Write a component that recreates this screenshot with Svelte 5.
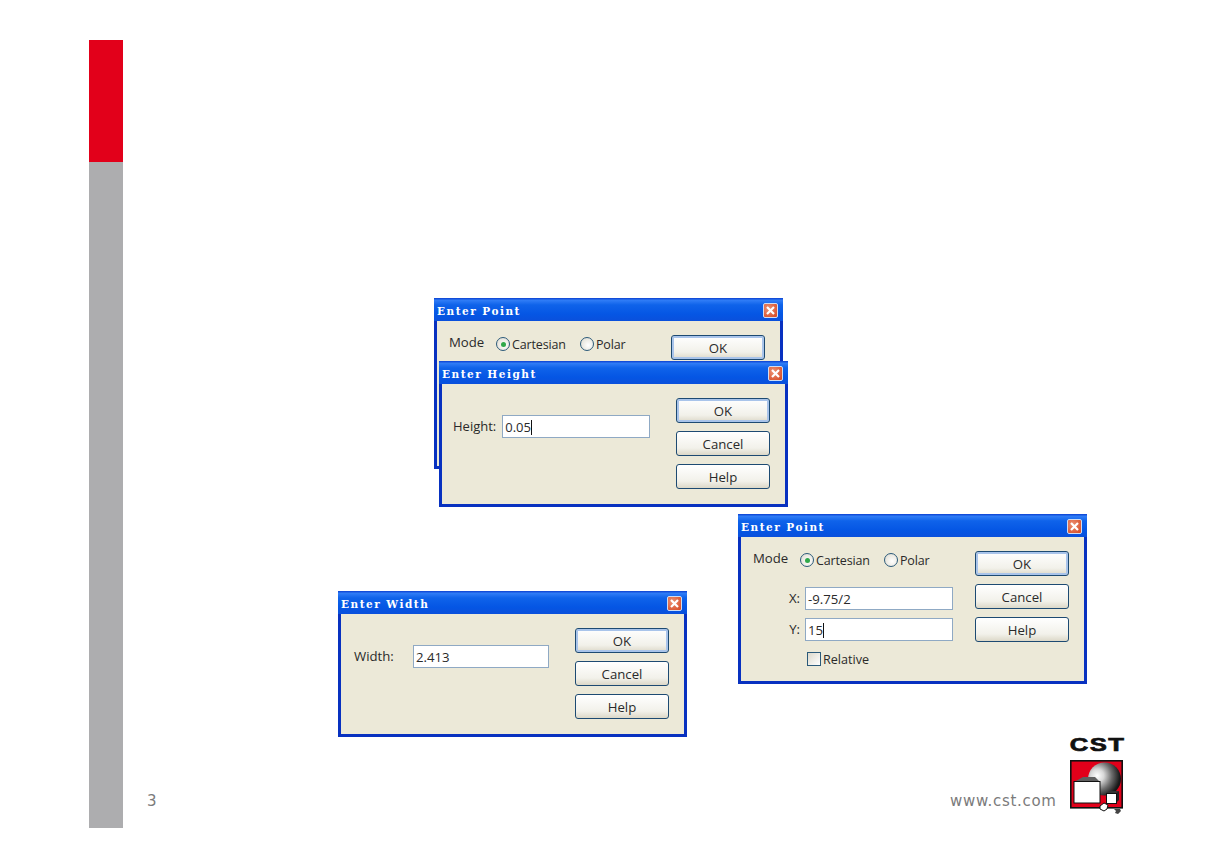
<script>
  const dialogs = [
    { id: "point-back", title: "Enter Point", kind: "point", x: "-9.75/2", y: "15", left: 434, top: 298, height: 171 },
    { id: "height", title: "Enter Height", kind: "height", value: "0.05", left: 439, top: 361, height: 146 },
    { id: "point", title: "Enter Point", kind: "point", x: "-9.75/2", y: "15", left: 738, top: 514, height: 170 },
    { id: "width", title: "Enter Width", kind: "width", value: "2.413", left: 338, top: 591, height: 146 },
  ];
</script>

<div class="page">
  <div class="rail">
    <div class="rail-red"></div>
    <div class="rail-grey"></div>
  </div>

  <div class="canvas">
    {#each dialogs as d (d.id)}
      <div class="dialog" style="left: {d.left}px; top: {d.top}px; height: {d.height}px">
        <div class="titlebar">
          <span class="title">{d.title}</span>
          <span class="close">
            <svg width="9" height="9" viewBox="0 0 9 9">
              <path d="M1 1l7 7M8 1l-7 7" stroke="#fff" stroke-width="2.2" fill="none" />
            </svg>
          </span>
        </div>
        <div class="body {d.kind}">
          <div class="main">
            {#if d.kind === "point"}
              <div class="mode">
                <span class="mode-label">Mode</span>
                <span class="radio on"></span>
                <span class="radio-label cartesian">Cartesian</span>
                <span class="radio"></span>
                <span class="radio-label">Polar</span>
              </div>
              <div class="coord">
                <span class="coord-label">X:</span>
                <span class="input">{d.x}</span>
              </div>
              <div class="coord">
                <span class="coord-label">Y:</span>
                <span class="input">{d.y}<i class="caret"></i></span>
              </div>
              <div class="relative">
                <span class="check"></span>
                <span>Relative</span>
              </div>
            {:else if d.kind === "height"}
              <div class="single">
                <span>Height:</span>
                <span class="input">{d.value}<i class="caret"></i></span>
              </div>
            {:else}
              <div class="single">
                <span class="width-label">Width:</span>
                <span class="input">{d.value}</span>
              </div>
            {/if}
          </div>
          <div class="buttons">
            <button class="default">OK</button>
            <button>Cancel</button>
            <button>Help</button>
          </div>
        </div>
      </div>
    {/each}

    <div class="logo">
      <span class="logo-text">CST</span>
      <svg width="58" height="58" viewBox="0 22 58 58">
        <defs>
          <radialGradient id="ball" cx="0.28" cy="0.4" r="0.8">
            <stop offset="0" stop-color="#ffffff" />
            <stop offset="0.25" stop-color="#d8d8d8" />
            <stop offset="0.55" stop-color="#6e6e6e" />
            <stop offset="0.85" stop-color="#1a1a1a" />
            <stop offset="1" stop-color="#0c0c0c" />
          </radialGradient>
        </defs>
        <rect x="2.8" y="23.8" width="51.4" height="47" fill="#e2001a" stroke="#111" stroke-width="1.6" />
        <circle cx="36.5" cy="42" r="16.5" fill="url(#ball)" />
        <path d="M6 45l9-5h12l5 5z" fill="#5f5f5f" />
        <rect x="6" y="44.5" width="26" height="21.5" fill="#fff" stroke="#111" />
        <path d="M38 56l4-2h9l-3 2z" fill="#333" />
        <path d="M48 56l3-2v9l-3 3z" fill="#222" />
        <rect x="38.5" y="56.5" width="10" height="10" fill="#fff" stroke="#111" />
        <path d="M32 69l4-3 4 2-1 4-3 2-4-2z" fill="#fff" stroke="#111" />
        <path d="M46 72h6l1 2-3 3-3-1 1-2z" fill="#444" />
      </svg>
    </div>
  </div>

  <span class="page-num">3</span>
  <span class="site">www.cst.com</span>
</div>

<style>
  :global(body) {
    margin: 0;
    background: #fff;
  }

  .page {
    position: relative;
    width: 1228px;
    height: 868px;
    overflow: hidden;
    font-family: "Open Sans", "Noto Sans", sans-serif;
  }

  .rail {
    position: absolute;
    left: 89px;
    top: 40px;
    width: 34px;
    height: 788px;
    display: flex;
    flex-direction: column;
  }

  .rail-red {
    height: 122px;
    background: #e2001a;
  }

  .rail-grey {
    flex: 1;
    background: #adadaf;
  }

  .canvas {
    position: absolute;
    inset: 0;
  }

  .dialog {
    position: absolute;
    width: 349px;
    box-sizing: border-box;
    display: flex;
    flex-direction: column;
    background: #0831c0;
    padding: 0 3px 3px;
    color: #2a2a2a;
    font-size: 13.2px;
  }

  .titlebar {
    height: 23px;
    margin: 0 -3px;
    padding: 0 5px 0 3px;
    display: flex;
    align-items: center;
    justify-content: space-between;
    background: linear-gradient(#0a3fd0 0, #2f7cf6 10%, #0f63ea 30%, #0556e4 70%, #0a50dc 100%);
    flex: none;
  }

  .title {
    font-family: "DejaVu Serif", serif;
    font-weight: 700;
    font-size: 10.5px;
    letter-spacing: 1.5px;
    color: #fff;
    position: relative;
    top: 1px;
  }

  .close {
    box-sizing: border-box;
    width: 15px;
    height: 15px;
    margin-top: 2px;
    border-radius: 2px;
    border: 1px solid #cfdcf2;
    background: radial-gradient(circle at 35% 35%, #ec9274, #d5451f);
    display: flex;
    align-items: center;
    justify-content: center;
  }

  .body {
    flex: 1;
    background: #ece9d8;
    display: flex;
    justify-content: space-between;
    padding: 14px 15px 0 12px;
    min-height: 0;
  }

  .main {
    flex: 1;
    min-width: 0;
  }

  .mode {
    display: flex;
    align-items: center;
    height: 18px;
    margin-bottom: 17px;
  }

  .mode-label {
    width: 47px;
    position: relative;
    top: -2px;
  }

  .radio {
    box-sizing: border-box;
    width: 14px;
    height: 14px;
    border: 1px solid #2b5a7a;
    border-radius: 50%;
    background: radial-gradient(circle at 60% 60%, #fff, #dcd9cc);
    margin-right: 2px;
    display: flex;
    align-items: center;
    justify-content: center;
    flex: none;
  }

  .radio.on::after {
    content: "";
    width: 5px;
    height: 5px;
    border-radius: 50%;
    background: #2fa84a;
  }

  .radio-label {
    font-size: 12.5px;
    letter-spacing: -0.15px;
  }

  .cartesian {
    width: 54px;
    margin-right: 14px;
  }

  .coord {
    display: flex;
    align-items: center;
    justify-content: flex-end;
    gap: 5px;
    width: 200px;
    height: 24px;
    margin-bottom: 7px;
  }

  .input {
    display: block;
    box-sizing: border-box;
    width: 148px;
    height: 23px;
    line-height: 22px;
    padding: 0 2px;
    background: #fff;
    border: 1px solid #8fa9c4;
    white-space: nowrap;
  }

  .caret {
    display: inline-block;
    width: 1px;
    height: 15px;
    background: #111;
    vertical-align: -3px;
  }

  .relative {
    display: flex;
    align-items: center;
    gap: 2px;
    margin: 9px 0 0 54px;
    height: 18px;
    font-size: 12.6px;
  }

  .check {
    box-sizing: border-box;
    width: 14px;
    height: 14px;
    border: 1px solid #2b5a7a;
    background: linear-gradient(135deg, #dcd9cc, #fff);
  }

  .single {
    display: flex;
    align-items: center;
    height: 24px;
    margin-top: 16px;
  }

  .height .single {
    gap: 6px;
    margin-left: -1px;
    font-size: 13px;
  }

  .width .single {
    margin-left: 1px;
  }

  .width-label {
    width: 59px;
  }

  .width .input {
    width: 136px;
  }

  .buttons {
    display: flex;
    flex-direction: column;
    gap: 8px;
    flex: none;
  }

  button {
    width: 94px;
    height: 25px;
    padding: 0;
    box-sizing: border-box;
    border: 1px solid #1d4a72;
    border-radius: 3px;
    background: linear-gradient(#fff, #f2f1ea 70%, #dcd8c8);
    font: inherit;
    color: #2a2a2a;
  }

  button.default {
    box-shadow: inset 0 0 0 2px #a9c4ea;
  }

  .logo {
    position: absolute;
    left: 1068px;
    top: 736px;
    width: 58px;
    display: flex;
    flex-direction: column;
    align-items: center;
    gap: 6px;
  }

  .logo-text {
    height: 17px;
    line-height: 17px;
    font-family: "Liberation Sans", sans-serif;
    font-weight: 700;
    font-size: 19px;
    letter-spacing: 1px;
    color: #111;
    -webkit-text-stroke: 0.7px #111;
    transform: scaleX(1.35);
  }

  .logo svg {
    display: block;
  }

  .page-num,
  .site {
    position: absolute;
    color: #7b7b7b;
    font-family: "DejaVu Sans", sans-serif;
    font-size: 15px;
    line-height: 18px;
    top: 792px;
  }

  .page-num {
    left: 147px;
  }

  .site {
    left: 950px;
    letter-spacing: 0.7px;
  }
</style>
